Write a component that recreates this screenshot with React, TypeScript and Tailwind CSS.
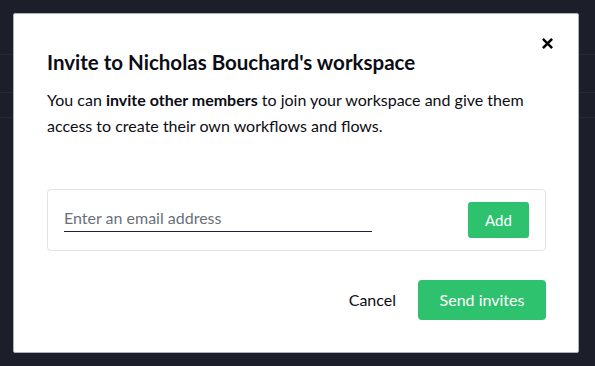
import React, { useState } from 'react';

export default function App() {
  const [email, setEmail] = useState('');

  return (
    <div
      className="relative w-[595px] h-[366px] bg-[#1c1f29] overflow-hidden pl-[13px] pt-[13px]"
      style={{ fontFamily: 'Lato, "Open Sans", sans-serif' }}
    >
      {/* faint rows of the page behind the overlay */}
      <div className="absolute left-0 top-[54px] w-full h-px bg-[#262935]" />
      <div className="absolute left-0 top-[92px] w-full h-px bg-[#262935]" />
      <div className="absolute left-0 top-[117px] w-full h-px bg-[#262935]" />

      <div className="relative w-[566px] h-[340px] bg-white border border-[#aab4c0] rounded-[2px] pl-[33px] pr-[32px] pt-[34px]">
        <button className="absolute right-[25px] top-[24px] w-[11px] h-[11px]" aria-label="Close">
          <svg viewBox="0 0 12 12" className="w-[11px] h-[11px]">
            <path d="M2 2 L10 10 M10 2 L2 10" stroke="#000" strokeWidth="2.8" strokeLinecap="square" />
          </svg>
        </button>

        <h2 className="text-[20.5px] leading-[28px] font-bold text-[#0b0d14]">
          Invite to Nicholas Bouchard's workspace
        </h2>
        <p className="mt-[11px] text-[16px] leading-[26px] text-[#0b0d14]">
          You can <strong className="font-bold">invite other members</strong> to join your workspace and give them
          access to create their own workflows and flows.
        </p>

        <div className="mt-[50px] h-[62px] border border-[#e2e2e2] rounded-[4px] flex items-start justify-between pl-[16px] pr-[16px] pt-[12px]">
          <input
            value={email}
            onChange={(e) => setEmail(e.target.value)}
            placeholder="Enter an email address"
            className="mt-px w-[308px] h-[29px] border-b border-[#1e2235] text-[16px] text-[#1e2235] placeholder:text-[#6b6f7a] outline-none"
          />
          <button className="w-[61px] h-[36px] bg-[#2ec26f] rounded-[3px] text-white text-[15px]">
            Add
          </button>
        </div>

        <div className="mt-[29px] flex items-center justify-end gap-[22px]">
          <button className="text-[16px] text-[#0b0d14]">Cancel</button>
          <button className="w-[128px] h-[40px] bg-[#2ec26f] rounded-[4px] text-white text-[16px]">
            Send invites
          </button>
        </div>
      </div>
    </div>
  );
}
